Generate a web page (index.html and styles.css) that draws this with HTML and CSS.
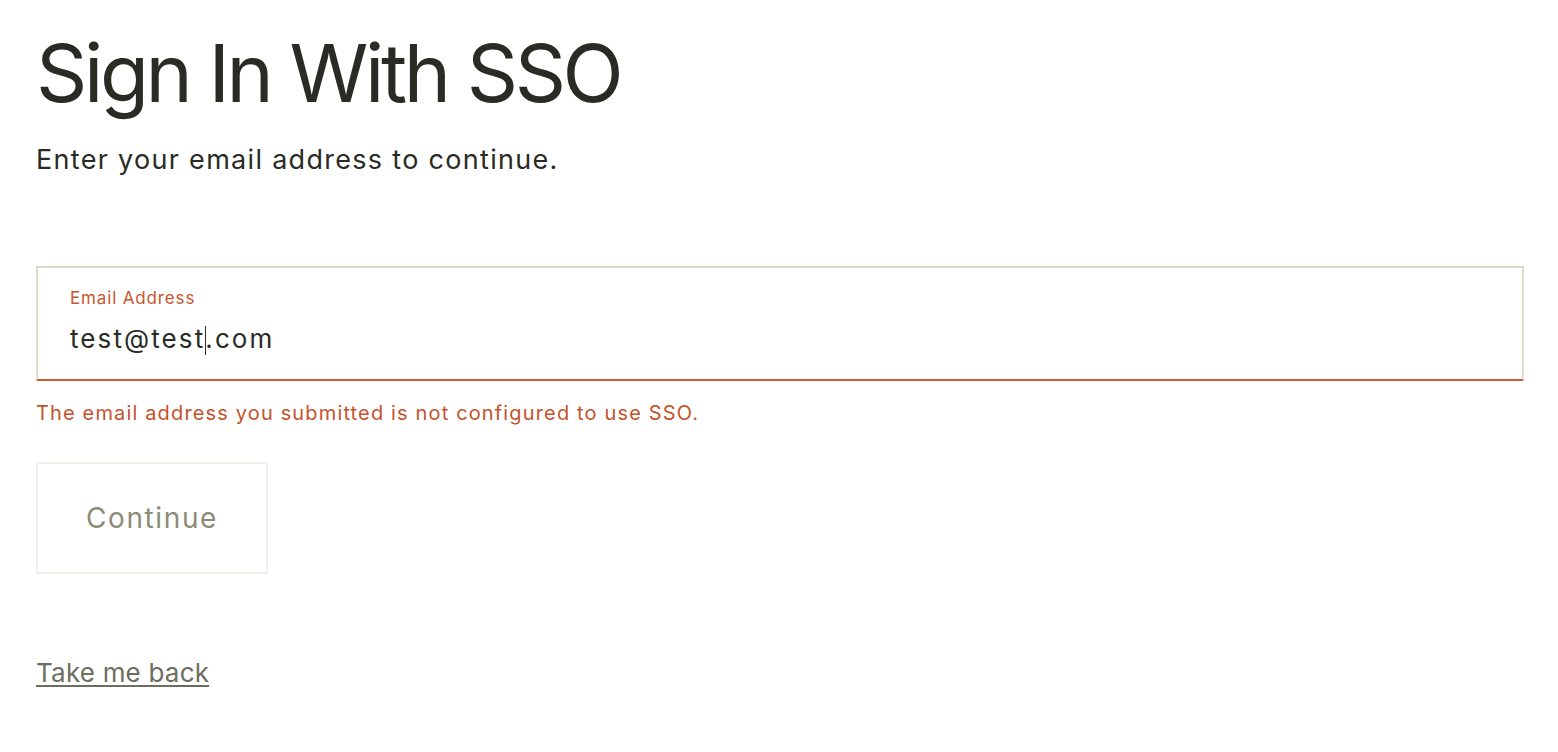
FILE: index.html
```html
<!DOCTYPE html>
<html lang="en">
<head>
<meta charset="utf-8">
<title>Sign In With SSO</title>
<link rel="stylesheet" href="styles.css">
</head>
<body>
<main class="page">
  <h1 class="title">Sign In With SSO</h1>
  <p class="subtitle">Enter your email address to continue.</p>
  <form class="form">
    <div class="field field--error">
      <label class="field-label">Email Address</label>
      <div class="field-value">test@test<span class="caret"></span>.com</div>
    </div>
    <p class="error-text">The email address you submitted is not configured to use SSO.</p>
    <button type="button" class="btn-continue">Continue</button>
  </form>
  <a class="back-link" href="#">Take me back</a>
</main>
</body>
</html>
```
FILE: styles.css
```css
* { box-sizing: border-box; }
html, body { margin: 0; padding: 0; background: #ffffff; }
body {
  font-family: Inter, "Liberation Sans", Arial, sans-serif;
  color: #2b2b25;
}
.page {
  display: flex;
  flex-direction: column;
  align-items: flex-start;
  padding: 33px 34px 0 36px;
}
.title {
  margin: 0;
  font-size: 80px;
  line-height: 80px;
  font-weight: 400;
  letter-spacing: -3.4px;
  color: #2b2b25;
}
.subtitle {
  margin: 29px 0 0 0;
  font-size: 27px;
  line-height: 35px;
  letter-spacing: 1.3px;
  color: #2b2b25;
}
.form {
  align-self: stretch;
  margin-top: 89px;
  display: flex;
  flex-direction: column;
  align-items: flex-start;
}
.field {
  align-self: stretch;
  border: 2px solid #dddccd;
  border-bottom: 2px solid #d35a2d;
  padding: 20px 32px 24px 32px;
  display: flex;
  flex-direction: column;
}
.field-label {
  font-size: 17px;
  line-height: 20px;
  letter-spacing: 0.85px;
  color: #c9552f;
}
.field-value {
  margin-top: 15px;
  font-size: 26px;
  line-height: 32px;
  letter-spacing: 2.1px;
  color: #2b2b25;
}
.caret {
  display: inline-block;
  width: 0;
  height: 29px;
  border-left: 1px solid #2b2b25;
  margin-right: -1px;
  vertical-align: -7px;
}
.error-text {
  margin: 19px 0 0 0;
  font-size: 20px;
  line-height: 26px;
  letter-spacing: 1.15px;
  color: #c6522c;
}
.btn-continue {
  margin-top: 36px;
  width: 232px;
  height: 112px;
  background: #ffffff;
  border: 2px solid #f1f1ec;
  font-family: Inter, "Liberation Sans", Arial, sans-serif;
  font-size: 28px;
  letter-spacing: 1.6px;
  color: #8c8b77;
  padding: 0;
}
.back-link {
  margin-top: 83px;
  font-size: 26px;
  line-height: 32px;
  letter-spacing: 0.2px;
  color: #6d6d5e;
  text-decoration: underline;
  text-decoration-thickness: 2px;
  text-underline-offset: 3px;
}
```
